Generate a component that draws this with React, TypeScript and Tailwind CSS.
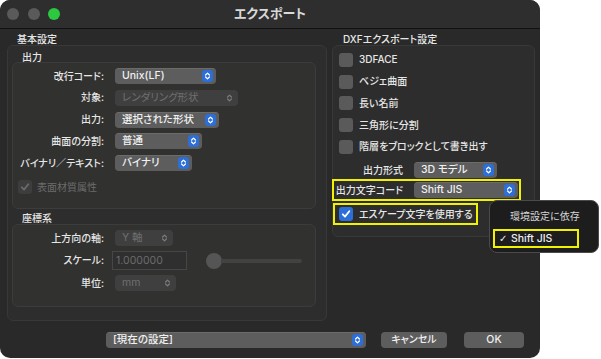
import React from 'react';

const Arrows = ({ color }: { color: string }) => (
  <svg width="7" height="10" viewBox="0 0 7 10" fill="none" stroke={color} strokeWidth="1.3" strokeLinecap="round" strokeLinejoin="round">
    <path d="M1.6 4 L3.5 2.1 L5.4 4" />
    <path d="M1.6 6 L3.5 7.9 L5.4 6" />
  </svg>
);

const Select = ({ value, w, disabled }: { value: string; w: string; disabled?: boolean }) =>
  disabled ? (
    <div className={`${w} flex h-[16px] items-center justify-between rounded-[4px] bg-[#3f3f3f] pl-[7px] pr-[5px] text-[10.5px] text-[#6f6f6f]`}>
      <span>{value}</span>
      <Arrows color="#7a7a7a" />
    </div>
  ) : (
    <div className={`${w} flex h-[16px] items-center justify-between rounded-[4px] bg-[#5d5d5d] pl-[7px] pr-[3px] text-[10.5px] font-medium text-[#f0f0f0] shadow-[inset_0_0.5px_0_rgba(255,255,255,0.18)]`}>
      <span>{value}</span>
      <div className="flex h-[12px] w-[11px] items-center justify-center rounded-[3px] bg-[#2d6fd8]">
        <Arrows color="#ffffff" />
      </div>
    </div>
  );

const Row = ({ label, children }: { label: string; children: React.ReactNode }) => (
  <div className="flex items-center gap-[11px]">
    <div className="w-[91px] text-right text-[10px] font-medium text-[#e6e6e6]">{label}</div>
    {children}
  </div>
);

const Box = ({ checked, disabled }: { checked?: boolean; disabled?: boolean }) => (
  <div
    className={`flex h-[14px] w-[14px] shrink-0 items-center justify-center rounded-[3px] ${
      checked ? 'bg-[#2d6fd8]' : disabled ? 'bg-[#3d3d3d]' : 'bg-[#5a5a5a]'
    }`}
  >
    {(checked || disabled) && (
      <svg width="10" height="10" viewBox="0 0 10 10" fill="none" stroke={checked ? '#ffffff' : '#6a6a6a'} strokeWidth="1.8" strokeLinecap="round" strokeLinejoin="round">
        <path d="M1.8 5.3 L4 7.6 L8.3 2.2" />
      </svg>
    )}
  </div>
);

const Check = ({ label }: { label: string }) => (
  <div className="flex h-[21.75px] items-center gap-[6px] pl-[6px]">
    <Box />
    <span className="text-[10px] font-medium text-[#e6e6e6]">{label}</span>
  </div>
);

export default function App() {
  return (
    <div className="relative h-[359px] w-[601px] whitespace-nowrap bg-white font-[Inter,'Noto_Sans_CJK_JP',sans-serif] [font-feature-settings:'palt']">
      <div className="flex h-[358px] w-[540px] flex-col overflow-hidden rounded-[10px] bg-[#292929]">
        {/* title bar */}
        <div className="grid h-[29px] shrink-0 grid-cols-[1fr_auto_1fr] items-center border-b border-[#111111] bg-[#2e2e2e]">
          <div className="flex items-center gap-[8.5px] pl-[7px]">
            <div className="h-[12px] w-[12px] rounded-full bg-[#5a5a5a]" />
            <div className="h-[12px] w-[12px] rounded-full bg-[#5a5a5a]" />
            <div className="h-[12px] w-[12px] rounded-full bg-[#2bc840]" />
          </div>
          <div className="text-[13px] font-bold text-[#d8d8d8]">エクスポート</div>
          <div />
        </div>

        {/* body */}
        <div className="flex gap-[5px] pl-[7px] pt-[4px]">
          {/* left */}
          <div className="flex w-[320px] flex-col">
            <div className="h-[12px] pl-[10px] text-[10px] font-medium leading-[12px] text-[#e6e6e6]">基本設定</div>
            <div className="flex h-[276px] flex-col rounded-[6px] border border-[#383838] bg-[#2d2d2d] pl-[4px] pr-[10px]">
              <div className="h-[16px] pl-[10px] pt-[5px] text-[10px] font-medium leading-[12px] text-[#e6e6e6]">出力</div>
              <div className="flex h-[147px] flex-col gap-[5.75px] rounded-[6px] border border-[#3c3c3c] bg-[#313130] pt-[5px]">
                <Row label="改行コード:"><Select w="w-[101px]" value="Unix(LF)" /></Row>
                <Row label="対象:"><Select w="w-[123px]" value="レンダリング形状" disabled /></Row>
                <Row label="出力:"><Select w="w-[104px]" value="選択された形状" /></Row>
                <Row label="曲面の分割:"><Select w="w-[87px]" value="普通" /></Row>
                <Row label="バイナリ／テキスト:"><Select w="w-[77px]" value="バイナリ" /></Row>
                <div className="mt-[3px] flex items-center gap-[5px] pl-[5px]">
                  <Box disabled />
                  <span className="text-[10px] text-[#6c6c6c]">表面材質属性</span>
                </div>
              </div>
              <div className="h-[15px] pl-[10px] pt-[3px] text-[10px] font-medium leading-[12px] text-[#e6e6e6]">座標系</div>
              <div className="flex h-[83px] flex-col gap-[5px] rounded-[6px] border border-[#3c3c3c] bg-[#313130] pt-[5px]">
                <Row label="上方向の軸:"><Select w="w-[58px]" value="Y 軸" disabled /></Row>
                <Row label="スケール:">
                  <div className="-ml-[3px] flex h-[19px] w-[75px] items-center border border-[#464646] bg-[#2f2f2f] pl-[3px] text-[10.5px] text-[#6c6c6c]">
                    1.000000
                  </div>
                  <div className="ml-[8px] flex items-center">
                    <div className="h-[16px] w-[16px] rounded-full bg-[#555555]" />
                    <div className="-ml-[1px] h-[4px] w-[81px] rounded-r-full bg-[#424242]" />
                  </div>
                </Row>
                <Row label="単位:"><Select w="w-[61px]" value="mm" disabled /></Row>
              </div>
            </div>
          </div>

          {/* right */}
          <div className="flex w-[203px] flex-col">
            <div className="h-[12px] pl-[11px] text-[10px] font-medium leading-[12px] text-[#e6e6e6]">DXFエクスポート設定</div>
            <div className="flex h-[192px] flex-col rounded-[6px] border border-[#383838] bg-[#2d2d2d] pt-[3px]">
              <Check label="3DFACE" />
              <Check label="ベジェ曲面" />
              <Check label="長い名前" />
              <Check label="三角形に分割" />
              <Check label="階層をブロックとして書き出す" />
              <div className="mt-[4.25px] flex h-[16px] items-center gap-[11px]">
                <div className="w-[70px] text-right text-[10px] font-medium text-[#e6e6e6]">出力形式</div>
                <Select w="w-[83px]" value="3D モデル" />
              </div>
              <div className="-ml-[1px] mt-[1px] flex h-[22px] w-[189px] items-center gap-[11px] border-2 border-[#f2f200]">
                <div className="w-[69px] text-right text-[10px] font-medium text-[#e6e6e6]">出力文字コード</div>
                <Select w="w-[104px]" value="Shift JIS" />
              </div>
              <div className="mt-[2px] flex h-[22px] w-[145px] items-center gap-[6px] border-2 border-[#f2f200] pl-[4px]">
                <Box checked />
                <span className="text-[10px] font-medium text-[#e6e6e6]">エスケープ文字を使用する</span>
              </div>
            </div>
          </div>
        </div>

        {/* footer */}
        <div className="flex h-[37px] items-center pl-[106px]">
          <Select w="w-[260px]" value="[現在の設定]" />
          <div className="ml-[15px] flex h-[16px] w-[66px] items-center justify-center rounded-[4px] bg-[#5d5d5d] text-[10px] font-medium text-[#f0f0f0]">キャンセル</div>
          <div className="ml-[17px] flex h-[16px] w-[60px] items-center justify-center rounded-[4px] bg-[#5d5d5d] text-[10.5px] font-medium text-[#f0f0f0]">OK</div>
        </div>
      </div>

      {/* popup menu */}
      <div className="absolute left-[489px] top-[200px] flex h-[53px] w-[110px] flex-col rounded-[8px] border border-[#4a4a4a] bg-[#1d1d1d] pt-[7px]">
        <div className="h-[16px] pl-[20px] text-[10px] leading-[16px] text-[#d6d6d6]">環境設定に依存</div>
        <div className="ml-[3px] mt-[5px] flex h-[19px] w-[86px] items-center border-2 border-[#f2f200] pl-[4px] text-[10.5px] font-medium text-[#eeeeee]">
          <span className="w-[12px] font-['DejaVu_Sans'] text-[10px]">✓</span>
          <span>Shift JIS</span>
        </div>
      </div>
    </div>
  );
}
